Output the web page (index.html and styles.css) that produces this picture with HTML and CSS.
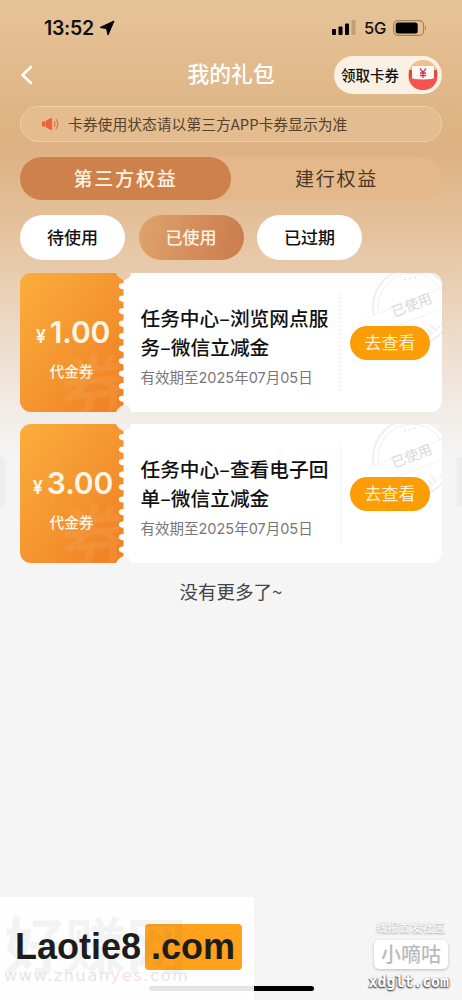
FILE: index.html
```html
<!DOCTYPE html>
<html lang="zh-CN">
<head>
<meta charset="utf-8">
<meta name="viewport" content="width=device-width">
<title>我的礼包</title>
<link rel="stylesheet" href="styles.css">
</head>
<body>
<svg width="0" height="0" class="defs">
  <defs>
    <linearGradient id="orange" x1="0" y1="0" x2="1" y2="1">
      <stop offset="0" stop-color="#faae3c"/><stop offset="1" stop-color="#f07f24"/>
    </linearGradient>
    <clipPath id="cardclip"><rect width="422" height="139" rx="11"/></clipPath>
    <clipPath id="leftclip"><rect width="99" height="139" rx="11"/></clipPath>
    <symbol id="ticket" viewBox="0 0 422 139">
      <path fill="#fff" d="M111 0H411a11 11 0 0 1 11 11V128a11 11 0 0 1-11 11H111a7 7 0 0 0-8-7V7a7 7 0 0 0 8-7Z"/>
      <path fill="url(#orange)" d="M11 0H96Q98 5 103.500 7V132Q98 134 96 139H11A11 11 0 0 1 0 128V11A11 11 0 0 1 11 0Z"/>
      <g fill="#fff"><ellipse cx="103" cy="13.100" rx="4.200" ry="3.100"/><ellipse cx="103" cy="25.600" rx="4.200" ry="3.100"/><ellipse cx="103" cy="38.100" rx="4.200" ry="3.100"/><ellipse cx="103" cy="50.600" rx="4.200" ry="3.100"/><ellipse cx="103" cy="63.100" rx="4.200" ry="3.100"/><ellipse cx="103" cy="75.600" rx="4.200" ry="3.100"/><ellipse cx="103" cy="88.100" rx="4.200" ry="3.100"/><ellipse cx="103" cy="100.600" rx="4.200" ry="3.100"/><ellipse cx="103" cy="113.100" rx="4.200" ry="3.100"/><ellipse cx="103" cy="125.600" rx="4.200" ry="3.100"/></g>
      <g clip-path="url(#leftclip)"><text class="ghost" x="41" y="140" transform="rotate(-6 78 110)">券</text></g>
      <path d="M320.500 20V119" stroke="#ececec" stroke-dasharray="2 2"/>
      <g clip-path="url(#cardclip)" fill="none" stroke="#efefef">
        <circle cx="392" cy="34" r="39" stroke-width="2"/>
        <circle cx="392" cy="34" r="34"/>
        <path d="M368 52a30 30 0 0 0 48 0" stroke="#f3f3f3" stroke-width="7" stroke-dasharray="3 2"/>
        <path d="M384 7l2-1M389 5.500l2-.5M394 4.500h2" stroke="#ddd"/>
        <path d="M345 45L424 13V39L353 69Z" fill="#fff" stroke="none"/>
        <path d="M347 45L424 14M352 62L424 35" stroke="#f2f2f2"/>
      </g>
      <text class="stamp" x="371" y="37" transform="rotate(-21 392 33)">已使用</text>
    </symbol>
  </defs>
</svg>
<div class="screen">
  <div class="status">
    <span class="time">13:52</span>
    <svg class="loc" width="16" height="16" viewBox="0 0 16 16"><path d="M15 1L1 7.500L7.500 8.500L9 15Z" stroke="#000" stroke-linejoin="round"/></svg>
    <svg class="signal" width="24" height="15" viewBox="0 0 24 15"><rect y="9" width="4" height="6" rx="1"/><rect x="6.500" y="6.500" width="4" height="8.500" rx="1"/><rect x="13" y="3.500" width="4" height="11.500" rx="1"/><rect x="19.500" width="4" height="15" rx="1" fill="#bea079"/></svg>
    <span class="net">5G</span>
    <svg class="battery" width="34" height="16" viewBox="0 0 34 16"><rect x=".6" y=".6" width="30" height="14.800" rx="4.500" fill="none" stroke="#9e8461" stroke-width="1.200"/><rect x="2.700" y="2.500" width="22" height="11" rx="2.500"/><path d="M32 5.500q2 2.500 0 5Z" fill="#9e8461"/></svg>
  </div>
  <header class="header">
    <svg width="14" height="20" viewBox="0 0 14 20"><path d="M11 2L2.500 10L11 18" fill="none" stroke="#fff" stroke-width="2.600" stroke-linecap="round" stroke-linejoin="round"/></svg>
    <h1>我的礼包</h1>
    <div class="claim"><span>领取卡券</span>
      <svg width="30" height="32" viewBox="0 0 30 32"><circle cx="15" cy="16" r="15" fill="#f3bd8c"/><path d="M1 11H29V18A14 13 0 0 1 1 18Z" fill="#d94d45"/><path d="M4 7H26V21H4Z" fill="#fff8f5"/><path d="M1 18Q5 20.500 15 20.500T29 18A14 13 0 0 1 1 18Z" fill="#f45350"/><path d="M12 9.500l3 4 3-4M15 13.500v5.500M12 14h6M12 16.500h6" fill="none" stroke="#dd3157" stroke-width="1.300"/></svg>
    </div>
  </header>
  <div class="notice">
    <svg width="18" height="14" viewBox="0 0 18 14"><path d="M0 4.500H3V9.500H0ZM3.500 4L10 .5V13.500L3.500 10Z" fill="#ed6237"/><path d="M12 4.500q2 2.500 0 5M14 2q3.500 5 0 10" fill="none" stroke="#ed7047" stroke-width="1.300"/></svg>
    <span>卡券使用状态请以第三方APP卡券显示为准</span>
  </div>
  <nav class="tabs"><span class="on">第三方权益</span><span>建行权益</span></nav>
  <div class="filters"><span>待使用</span><span class="on">已使用</span><span>已过期</span></div>
  <main class="cards">
    <article class="card">
      <svg class="shape" width="422" height="139"><use href="#ticket"/></svg>
      <div class="value"><p class="price"><small>¥</small>1.00</p><p class="kind">代金券</p></div>
      <div class="info"><h2>任务中心–浏览网点服<br>务–微信立减金</h2><p>有效期至2025年07月05日</p></div>
      <div class="action"><span>去查看</span></div>
    </article>
    <article class="card">
      <svg class="shape" width="422" height="139"><use href="#ticket"/></svg>
      <div class="value"><p class="price"><small>¥</small>3.00</p><p class="kind">代金券</p></div>
      <div class="info"><h2>任务中心–查看电子回<br>单–微信立减金</h2><p>有效期至2025年07月05日</p></div>
      <div class="action"><span>去查看</span></div>
    </article>
  </main>
  <p class="end">没有更多了~</p>
  <i class="edge left"></i><i class="edge right"></i>
  <i class="home"></i>
  <div class="site">
    <i class="homeghost"></i>
    <div class="brand"><span>Laotie8</span><span class="dot">.com</span></div>
    <div class="mark"><b>好赚网</b><span>www.zhuan<em>yes</em>.com</span></div>
  </div>
  <div class="forum"><span class="top">线报首发社区</span><span class="name">小嘀咕</span><span class="url">xdglt.com</span></div>
</div>
</body>
</html>
```
FILE: styles.css
```css
* { box-sizing: border-box; margin: 0; padding: 0; }
body { font-family: "Noto Sans CJK SC", sans-serif; color: #111; }
.defs { position: absolute; }
.screen {
  position: relative; width: 462px; height: 1000px; overflow: hidden; padding: 0 20px;
  background: linear-gradient(#e6c498 0, #e3bd8f 50px, #dfb586 110px, #ddb183 150px, #e2bc92 200px, #e8cbad 270px, #eddccb 340px, #f2ece6 410px, #f5f5f5 460px);
}
.status { display: flex; align-items: center; height: 55px; padding-left: 24px; }
.time { font: 600 19.500px/24px Inter, sans-serif; width: 54px; letter-spacing: -.3px; white-space: nowrap; }
.loc { margin-left: 1px; margin-right: 217px; flex: none; }
.signal, .battery { flex: none; }
.net { font: 500 16.500px/20px Inter, sans-serif; width: 22px; margin: 0 7px 0 8px; letter-spacing: -.3px; }
.header { display: grid; grid-template-columns: 108px 1fr 108px; align-items: center; height: 39px; }
.header h1 { font-size: 21.800px; line-height: 32px; font-weight: 500; color: #fff; text-align: center; padding-bottom: 3px; }
.claim { display: flex; align-items: center; justify-content: space-between; height: 38px; padding: 0 4px 0 7px; border-radius: 19px; background: #faf0e4; font-size: 14.500px; font-weight: 500; white-space: nowrap; margin-top: 1px; }
.claim span { padding-bottom: 2px; }
.claim svg { flex: none; }
.notice { display: flex; align-items: center; gap: 8px; height: 36px; margin-top: 12px; padding-left: 21px; border: 1.500px solid #eed0a8; border-radius: 18px; background: #e3bc90; color: #55412d; font-size: 14.800px; white-space: nowrap; }
.notice span { padding-bottom: 2px; }
.tabs { display: grid; grid-template-columns: 1fr 1fr; height: 43px; margin-top: 15px; border-radius: 22px; background: #e4b88a; font-size: 19px; letter-spacing: 1.800px; line-height: 41px; text-align: center; color: #4a3828; }
.tabs .on { background: #cf814c; color: #fff3e6; border-radius: 22px; font-weight: 500; }
.filters { display: flex; gap: 13.500px; margin-top: 15px; font-size: 17px; font-weight: 500; line-height: 43px; text-align: center; }
.filters span { width: 105px; height: 45px; border-radius: 23px; background: #fff; }
.filters .on { color: #fff3e6; background: linear-gradient(100deg, #dfa36b, #ca7b4d); }
.cards { display: grid; gap: 12px; margin-top: 13px; }
.card { position: relative; display: grid; grid-template-columns: 103px 227px 80px; height: 139px; }
.shape { position: absolute; left: 0; top: 0; }
.ghost { font: 500 70px "Noto Sans CJK SC", sans-serif; fill: #fff; opacity: .065; }
.stamp { font: 400 14px "Noto Sans CJK SC", sans-serif; fill: #d8d8d8; }
.value, .info, .action { position: relative; }
.value { color: #fff6e8; text-align: center; padding-top: 41px; }
.price { font: 600 30px/36px Inter, sans-serif; white-space: nowrap; padding-left: 3px; letter-spacing: -.1px; }
.price small { font-size: 18px; font-weight: 600; margin-right: 4px; }
.kind { font-size: 14.700px; font-weight: 500; line-height: 22px; margin-top: 5px; }
.info { padding: 30px 0 0 17.500px; white-space: nowrap; }
.info h2 { font-size: 19.700px; font-weight: 500; line-height: 29.300px; color: #111; }
.info p { font-family: Inter, "Noto Sans CJK SC", sans-serif; font-size: 14.500px; line-height: 20px; color: #777; margin-top: 6px; }
.action { padding-top: 53px; }
.action span { display: block; height: 34px; border-radius: 17px; background: #fc9d06; color: #fff0cf; text-align: center; font-size: 17px; line-height: 32px; }
.end { text-align: center; font-size: 18.500px; line-height: 28px; margin-top: 14px; color: #444; }
.edge { position: absolute; top: 457px; width: 6px; height: 50px; background: linear-gradient(90deg, #ebebeb, #f1f1f1); }
.edge.left { left: 0; }
.edge.right { right: 0; transform: scaleX(-1); }
.home { position: absolute; left: 149px; top: 986px; width: 165px; height: 5px; border-radius: 3px; background: #000; }
.site { position: absolute; left: 0; top: 897px; width: 254px; height: 103px; background: #fefefe; overflow: hidden; }
.homeghost { position: absolute; left: 149px; top: 89px; width: 105px; height: 5px; border-radius: 3px 0 0 3px; background: #e5e5e5; }
.mark { position: absolute; left: 4px; top: 14px; color: #555; opacity: .15; }
.mark b { display: block; font-size: 61px; line-height: 64px; font-weight: 700; white-space: nowrap; opacity: .4; }
.mark span { display: block; font: 16px/18px "DejaVu Sans", sans-serif; margin-top: -8px; letter-spacing: 1.700px; white-space: nowrap; }
.mark em { font-style: normal; color: #e0401c; }
.brand { position: absolute; left: 15px; top: 27px; display: flex; gap: 4px; font: bold 36px/46px "Liberation Sans", sans-serif; color: #1b1b1b; }
.brand .dot { width: 97px; height: 46px; padding-left: 6px; border-radius: 4px; background: #ffa11c; }
.forum { position: absolute; left: 364px; top: 919px; width: 85px; display: grid; justify-items: end; text-align: center; }
.forum .top { font-size: 11.500px; line-height: 17px; font-weight: 700; color: #f4f4f4; text-shadow: 0 1px 2px #aaa; margin-right: 4px; }
.forum .name { width: 74px; height: 29px; margin-top: 4px; margin-right: 1px; border-radius: 5px; background: #fff; box-shadow: 0 1px 3px #bbb; color: #bbb; font-size: 20px; font-weight: 500; line-height: 27px; }
.forum .url { font: bold 15px/18px "DejaVu Sans Mono", monospace; color: #fff; text-shadow: 0 1px 2px #444, -1px 1px 1px #888, 1px 0 1px #999; margin-top: 4px; letter-spacing: -.1px; }
```
